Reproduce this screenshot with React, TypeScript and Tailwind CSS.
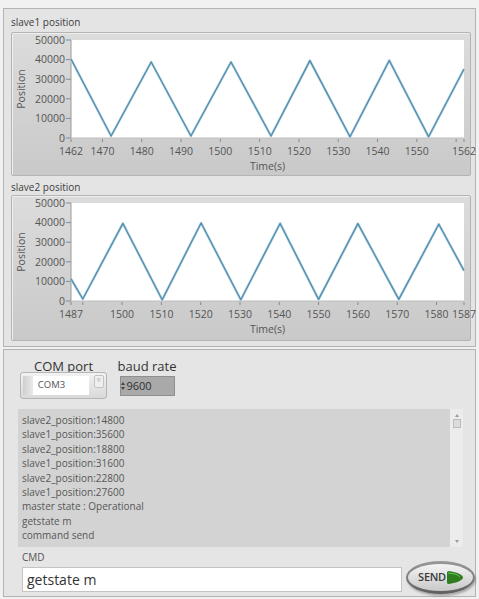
import React from "react";

type Pt = [number, number];

// Triangle-wave position traces for the two slaves
const slave1: Pt[] = [
  [1462, 40300], [1472.2, 1000], [1482.4, 38800], [1492.5, 1000], [1502.7, 38800],
  [1512.9, 1000], [1522.8, 39500], [1533, 600], [1543, 39600], [1553, 600], [1562, 35200],
];

const slave2: Pt[] = [
  [1487, 11300], [1490, 1000], [1500.2, 39600], [1510.2, 600], [1520.1, 39800],
  [1530.2, 600], [1540.2, 39600], [1550, 800], [1560, 39500], [1570.4, 800],
  [1580.6, 39200], [1587, 15500],
];

const PLOT_X = 59;
const PLOT_Y = 7;
const PLOT_W = 393;
const PLOT_H = 98;

const sx = (t: number, t0: number) => PLOT_X + ((t - t0) / 100) * PLOT_W;
const sy = (v: number) => PLOT_Y + PLOT_H * (1 - v / 50000);

function Chart({
  data,
  t0,
  ticks,
  hidden,
  height,
}: {
  data: Pt[];
  t0: number;
  ticks: number[];
  hidden: number[];
  height: number;
}) {
  const points = data.map(([t, v]) => `${sx(t, t0).toFixed(1)},${sy(v).toFixed(1)}`).join(" ");
  const yTicks = [50000, 40000, 30000, 20000, 10000, 0];
  const bottom = PLOT_Y + PLOT_H;

  return (
    <div
      className="w-[460px] rounded-[2px] border border-[#b4b4b4] bg-gradient-to-b from-[#dcdcdc] to-[#c9c9c9] shadow-[inset_1px_1px_0_#eeeeee]"
      style={{ height }}
    >
      <svg
        width={458}
        height={height - 2}
        overflow="visible"
        fontFamily="'Open Sans', sans-serif"
        fontSize={10.5}
      >
        <rect x={PLOT_X} y={PLOT_Y} width={PLOT_W} height={PLOT_H} fill="#ffffff" />
        <line x1={PLOT_X} y1={PLOT_Y} x2={PLOT_X} y2={bottom} stroke="#9a9a9a" />
        <line x1={PLOT_X} y1={bottom} x2={PLOT_X + PLOT_W} y2={bottom} stroke="#bdbdbd" />

        {yTicks.map((v) => (
          <g key={v}>
            <line x1={PLOT_X - 5} y1={sy(v)} x2={PLOT_X} y2={sy(v)} stroke="#8a8a8a" />
            <text x={PLOT_X - 6} y={sy(v) + 3.8} textAnchor="end" fill="#555555">
              {v}
            </text>
          </g>
        ))}

        {ticks.map((t) => (
          <g key={t}>
            <line x1={sx(t, t0)} y1={bottom + 1} x2={sx(t, t0)} y2={bottom + 4} stroke="#8a8a8a" />
            {!hidden.includes(t) && (
              <text x={sx(t, t0)} y={bottom + 17} textAnchor="middle" fill="#555555">
                {t}
              </text>
            )}
          </g>
        ))}

        <text x={13} y={56} textAnchor="middle" fill="#555555" transform="rotate(-90 13 56)">
          Position
        </text>
        <text x={PLOT_X + PLOT_W / 2} y={bottom + 32} textAnchor="middle" fill="#555555">
          Time(s)
        </text>

        <polyline points={points} fill="none" stroke="#b3d3e4" strokeWidth={2.6} strokeLinejoin="round" />
        <polyline points={points} fill="none" stroke="#4f8aa8" strokeWidth={1.2} strokeLinejoin="round" />
      </svg>
    </div>
  );
}

const logLines = [
  "slave2_position:14800",
  "slave1_position:35600",
  "slave2_position:18800",
  "slave1_position:31600",
  "slave2_position:22800",
  "slave1_position:27600",
  "master state : Operational",
  "getstate m",
  "command send",
];

export default function App() {
  return (
    <div className="w-[479px] h-[599px] overflow-hidden bg-[#f1f1f1] pt-[8px] px-[3px] font-['Open_Sans',sans-serif]">
      {/* Graph panel */}
      <div className="h-[339px] border border-[#b3b3b3] bg-[#e4e4e4] pl-[7px] pt-[5px]">
        <div className="text-[10px] leading-[16px] text-[#3c3c3c]">slave1 position</div>
        <div className="mt-[2px]">
          <Chart
            data={slave1}
            t0={1462}
            height={144}
            ticks={[1462, 1470, 1480, 1490, 1500, 1510, 1520, 1530, 1540, 1550, 1560, 1562]}
            hidden={[1560]}
          />
        </div>
        <div className="mt-[3px] text-[10px] leading-[16px] text-[#3c3c3c]">slave2 position</div>
        <Chart
          data={slave2}
          t0={1487}
          height={146}
          ticks={[1487, 1490, 1500, 1510, 1520, 1530, 1540, 1550, 1560, 1570, 1580, 1587]}
          hidden={[1490]}
        />
      </div>

      {/* Serial control panel */}
      <div className="mt-[2px] h-[248px] border border-[#b3b3b3] bg-[#e5e5e5] pl-[14px] pt-[9px]">
        <div className="flex gap-[10px]">
          <div className="ml-[2px] flex w-[87px] flex-col items-center">
            <div className="text-[13px] leading-[14px] text-[#333333]">COM port</div>
            <div className="mt-[-1px] flex h-[27px] w-[87px] items-center rounded-[3px] border border-[#b5b5b5] bg-gradient-to-b from-[#f2f2f2] to-[#d9d9d9] px-[2px]">
              <div className="h-[19px] w-[10px] bg-gradient-to-r from-[#cfcfcf] to-[#e9e9e9]" />
              <div className="flex h-[19px] w-[57px] items-center bg-white pl-[5px] text-[9.5px] text-[#555555]">
                COM3
              </div>
              <div className="ml-[5px] mt-[2px] flex h-[13px] w-[10px] self-start items-start justify-center rounded-[2px] border border-[#c2c2c2] bg-[#efefef] text-[7px] leading-[8px] text-[#888888]">
                ▿
              </div>
            </div>
          </div>
          <div className="flex w-[60px] flex-col items-center">
            <div className="text-[13px] leading-[14px] text-[#333333]">baud rate</div>
            <div className="mt-[3px] flex h-[20px] w-[55px] items-center border border-[#8f8f8f] bg-[#a9a9a9]">
              <div className="flex h-full w-[5px] flex-col items-center justify-center gap-[2px]">
                <span className="block h-0 w-0 border-x-[2px] border-b-[3px] border-x-transparent border-b-[#444444]" />
                <span className="block h-0 w-0 border-x-[2px] border-t-[3px] border-x-transparent border-t-[#444444]" />
              </div>
              <div className="ml-[1px] text-[11px] text-[#2f2f2f]">9600</div>
            </div>
          </div>
        </div>

        {/* Message log */}
        <div className="mt-[10px] flex h-[138px] w-[445px]">
          <div className="w-[432px] bg-[#d3d3d3] pl-[4px] pt-[4px]">
            {logLines.map((line, i) => (
              <div key={i} className="text-[10px] leading-[14.4px] text-[#575757]">
                {line}
              </div>
            ))}
          </div>
          <div className="flex w-[13px] flex-col items-center justify-between bg-[#ececec] py-[2px]">
            <div className="flex flex-col items-center gap-[2px]">
              <span className="mt-[3px] block h-0 w-0 border-x-[2px] border-b-[3px] border-x-transparent border-b-[#9a9a9a]" />
              <span className="block h-[9px] w-[8px] border border-[#bcbcbc] bg-[#dcdcdc]" />
            </div>
            <span className="mb-[2px] block h-0 w-0 border-x-[2px] border-t-[3px] border-x-transparent border-t-[#9a9a9a]" />
          </div>
        </div>

        {/* Command line */}
        <div className="flex items-end">
          <div className="ml-[4px] flex flex-col">
            <div className="mt-[3px] text-[10px] leading-[14px] text-[#555555]">CMD</div>
            <div className="mt-[3px] flex h-[25px] w-[380px] items-center border border-[#c4c4c4] bg-white pl-[4px] text-[14px] text-[#333333]">
              getstate m
            </div>
          </div>
          <div className="mb-[-2px] ml-[4px] flex h-[33px] w-[71px] items-center justify-center rounded-[50%] bg-gradient-to-b from-[#9a9a9a] to-[#5e5e5e] shadow-[1px_2px_2px_rgba(0,0,0,0.25)]">
            <div className="flex h-[27px] w-[65px] items-center justify-center gap-[1px] rounded-[50%] bg-gradient-to-b from-[#f4f4f4] to-[#c9c9c9]">
              <span className="text-[11px] font-semibold tracking-tight text-[#3a3a3a]">SEND</span>
              <svg width="16" height="13" viewBox="0 0 16 13">
                <path d="M0 1.5 Q0 0 2 0 L9 1.5 Q16 4 16 6.5 Q16 9 9 11.5 L2 13 Q0 13 0 11.5 Z" fill="#2e7d1f" />
                <path d="M1 2 L8 3 Q12 4.5 13 6" stroke="#6fc05a" strokeWidth="1" fill="none" />
              </svg>
            </div>
          </div>
        </div>
      </div>
    </div>
  );
}
